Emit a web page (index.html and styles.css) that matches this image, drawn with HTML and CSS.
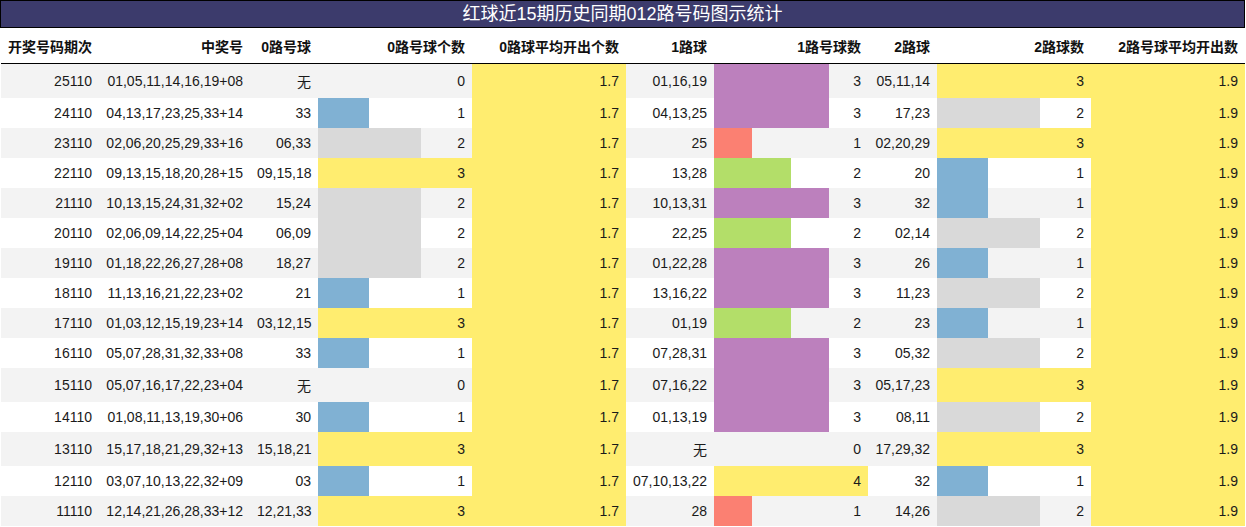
FILE: index.html
```html
<!DOCTYPE html>
<html lang="zh-CN">
<head>
<meta charset="utf-8">
<title>红球近15期历史同期012路号码图示统计</title>
<link rel="stylesheet" href="styles.css">
</head>
<body>
<div class="page">
  <div class="title">红球近15期历史同期012路号码图示统计</div>
  <table class="stats">
    <colgroup>
      <col class="w-issue"><col class="w-nums"><col class="w-r0">
      <col class="w-bar"><col class="w-bar"><col class="w-r1">
      <col class="w-bar"><col class="w-r2"><col class="w-bar"><col class="w-bar">
    </colgroup>
    <thead>
      <tr>
        <th>开奖号码期次</th><th>中奖号</th><th>0路号球</th><th>0路号球个数</th><th>0路球平均开出个数</th>
        <th>1路球</th><th>1路号球数</th><th>2路球</th><th>2路球数</th><th>2路号球平均开出数</th>
      </tr>
    </thead>
    <tbody>
      <tr><td>25110</td><td>01,05,11,14,16,19+08</td><td>无</td><td>0</td><td class="avg">1.7</td><td>01,16,19</td><td class="bar c-purple" style="--w:75%">3</td><td>05,11,14</td><td class="bar c-yellow" style="--w:100%">3</td><td class="avg">1.9</td></tr>
      <tr><td>24110</td><td>04,13,17,23,25,33+14</td><td>33</td><td class="bar c-blue" style="--w:33.333%">1</td><td class="avg">1.7</td><td>04,13,25</td><td class="bar c-purple" style="--w:75%">3</td><td>17,23</td><td class="bar c-grey" style="--w:66.667%">2</td><td class="avg">1.9</td></tr>
      <tr><td>23110</td><td>02,06,20,25,29,33+16</td><td>06,33</td><td class="bar c-grey" style="--w:66.667%">2</td><td class="avg">1.7</td><td>25</td><td class="bar c-red" style="--w:25%">1</td><td>02,20,29</td><td class="bar c-yellow" style="--w:100%">3</td><td class="avg">1.9</td></tr>
      <tr><td>22110</td><td>09,13,15,18,20,28+15</td><td>09,15,18</td><td class="bar c-yellow" style="--w:100%">3</td><td class="avg">1.7</td><td>13,28</td><td class="bar c-green" style="--w:50%">2</td><td>20</td><td class="bar c-blue" style="--w:33.333%">1</td><td class="avg">1.9</td></tr>
      <tr><td>21110</td><td>10,13,15,24,31,32+02</td><td>15,24</td><td class="bar c-grey" style="--w:66.667%">2</td><td class="avg">1.7</td><td>10,13,31</td><td class="bar c-purple" style="--w:75%">3</td><td>32</td><td class="bar c-blue" style="--w:33.333%">1</td><td class="avg">1.9</td></tr>
      <tr><td>20110</td><td>02,06,09,14,22,25+04</td><td>06,09</td><td class="bar c-grey" style="--w:66.667%">2</td><td class="avg">1.7</td><td>22,25</td><td class="bar c-green" style="--w:50%">2</td><td>02,14</td><td class="bar c-grey" style="--w:66.667%">2</td><td class="avg">1.9</td></tr>
      <tr><td>19110</td><td>01,18,22,26,27,28+08</td><td>18,27</td><td class="bar c-grey" style="--w:66.667%">2</td><td class="avg">1.7</td><td>01,22,28</td><td class="bar c-purple" style="--w:75%">3</td><td>26</td><td class="bar c-blue" style="--w:33.333%">1</td><td class="avg">1.9</td></tr>
      <tr><td>18110</td><td>11,13,16,21,22,23+02</td><td>21</td><td class="bar c-blue" style="--w:33.333%">1</td><td class="avg">1.7</td><td>13,16,22</td><td class="bar c-purple" style="--w:75%">3</td><td>11,23</td><td class="bar c-grey" style="--w:66.667%">2</td><td class="avg">1.9</td></tr>
      <tr><td>17110</td><td>01,03,12,15,19,23+14</td><td>03,12,15</td><td class="bar c-yellow" style="--w:100%">3</td><td class="avg">1.7</td><td>01,19</td><td class="bar c-green" style="--w:50%">2</td><td>23</td><td class="bar c-blue" style="--w:33.333%">1</td><td class="avg">1.9</td></tr>
      <tr><td>16110</td><td>05,07,28,31,32,33+08</td><td>33</td><td class="bar c-blue" style="--w:33.333%">1</td><td class="avg">1.7</td><td>07,28,31</td><td class="bar c-purple" style="--w:75%">3</td><td>05,32</td><td class="bar c-grey" style="--w:66.667%">2</td><td class="avg">1.9</td></tr>
      <tr><td>15110</td><td>05,07,16,17,22,23+04</td><td>无</td><td>0</td><td class="avg">1.7</td><td>07,16,22</td><td class="bar c-purple" style="--w:75%">3</td><td>05,17,23</td><td class="bar c-yellow" style="--w:100%">3</td><td class="avg">1.9</td></tr>
      <tr><td>14110</td><td>01,08,11,13,19,30+06</td><td>30</td><td class="bar c-blue" style="--w:33.333%">1</td><td class="avg">1.7</td><td>01,13,19</td><td class="bar c-purple" style="--w:75%">3</td><td>08,11</td><td class="bar c-grey" style="--w:66.667%">2</td><td class="avg">1.9</td></tr>
      <tr><td>13110</td><td>15,17,18,21,29,32+13</td><td>15,18,21</td><td class="bar c-yellow" style="--w:100%">3</td><td class="avg">1.7</td><td>无</td><td>0</td><td>17,29,32</td><td class="bar c-yellow" style="--w:100%">3</td><td class="avg">1.9</td></tr>
      <tr><td>12110</td><td>03,07,10,13,22,32+09</td><td>03</td><td class="bar c-blue" style="--w:33.333%">1</td><td class="avg">1.7</td><td>07,10,13,22</td><td class="bar c-yellow" style="--w:100%">4</td><td>32</td><td class="bar c-blue" style="--w:33.333%">1</td><td class="avg">1.9</td></tr>
      <tr><td>11110</td><td>12,14,21,26,28,33+12</td><td>12,21,33</td><td class="bar c-yellow" style="--w:100%">3</td><td class="avg">1.7</td><td>28</td><td class="bar c-red" style="--w:25%">1</td><td>14,26</td><td class="bar c-grey" style="--w:66.667%">2</td><td class="avg">1.9</td></tr>
    </tbody>
  </table>
</div>
</body>
</html>
```

FILE: styles.css
```css
html, body {
  margin: 0;
  padding: 0;
  background: #ffffff;
}

body {
  font-family: "Liberation Sans", "Noto Sans CJK SC", sans-serif;
  font-size: 14px;
  color: #1a1a1a;
}

.page {
  width: 1246px;
}

.title {
  box-sizing: border-box;
  width: 1245px;
  height: 28px;
  border: 1px solid #000000;
  background: #3c3b6c;
  color: #ffffff;
  font-size: 18px;
  line-height: 26px;
  text-align: center;
}

.stats {
  margin-left: 1px;
  width: 1244px;
  table-layout: fixed;
  border-collapse: collapse;
  border-spacing: 0;
}

.w-issue { width: 98px; }
.w-nums { width: 151px; }
.w-r0 { width: 68px; }
.w-r1 { width: 88px; }
.w-r2 { width: 69px; }
.w-bar { width: 154px; }

.stats th,
.stats td {
  padding: 7px 7px;
  text-align: right;
  white-space: nowrap;
  line-height: normal;
}

.stats th {
  padding-top: 8px;
  padding-bottom: 7px;
  font-weight: bold;
  color: #111111;
  border-bottom: 1px solid #000000;
}

.stats tbody tr:nth-child(odd) {
  background-color: #f3f3f3;
}

.stats tbody tr:nth-child(even) {
  background-color: #ffffff;
}

.avg {
  background-color: #ffed6f;
}

.bar {
  background-image: linear-gradient(to right, var(--c) var(--w), transparent var(--w));
  background-repeat: no-repeat;
}

.c-blue { --c: #80b1d3; }
.c-grey { --c: #d9d9d9; }
.c-yellow { --c: #ffed6f; }
.c-purple { --c: #bc80bd; }
.c-green { --c: #b3de69; }
.c-red { --c: #fb8072; }
```
